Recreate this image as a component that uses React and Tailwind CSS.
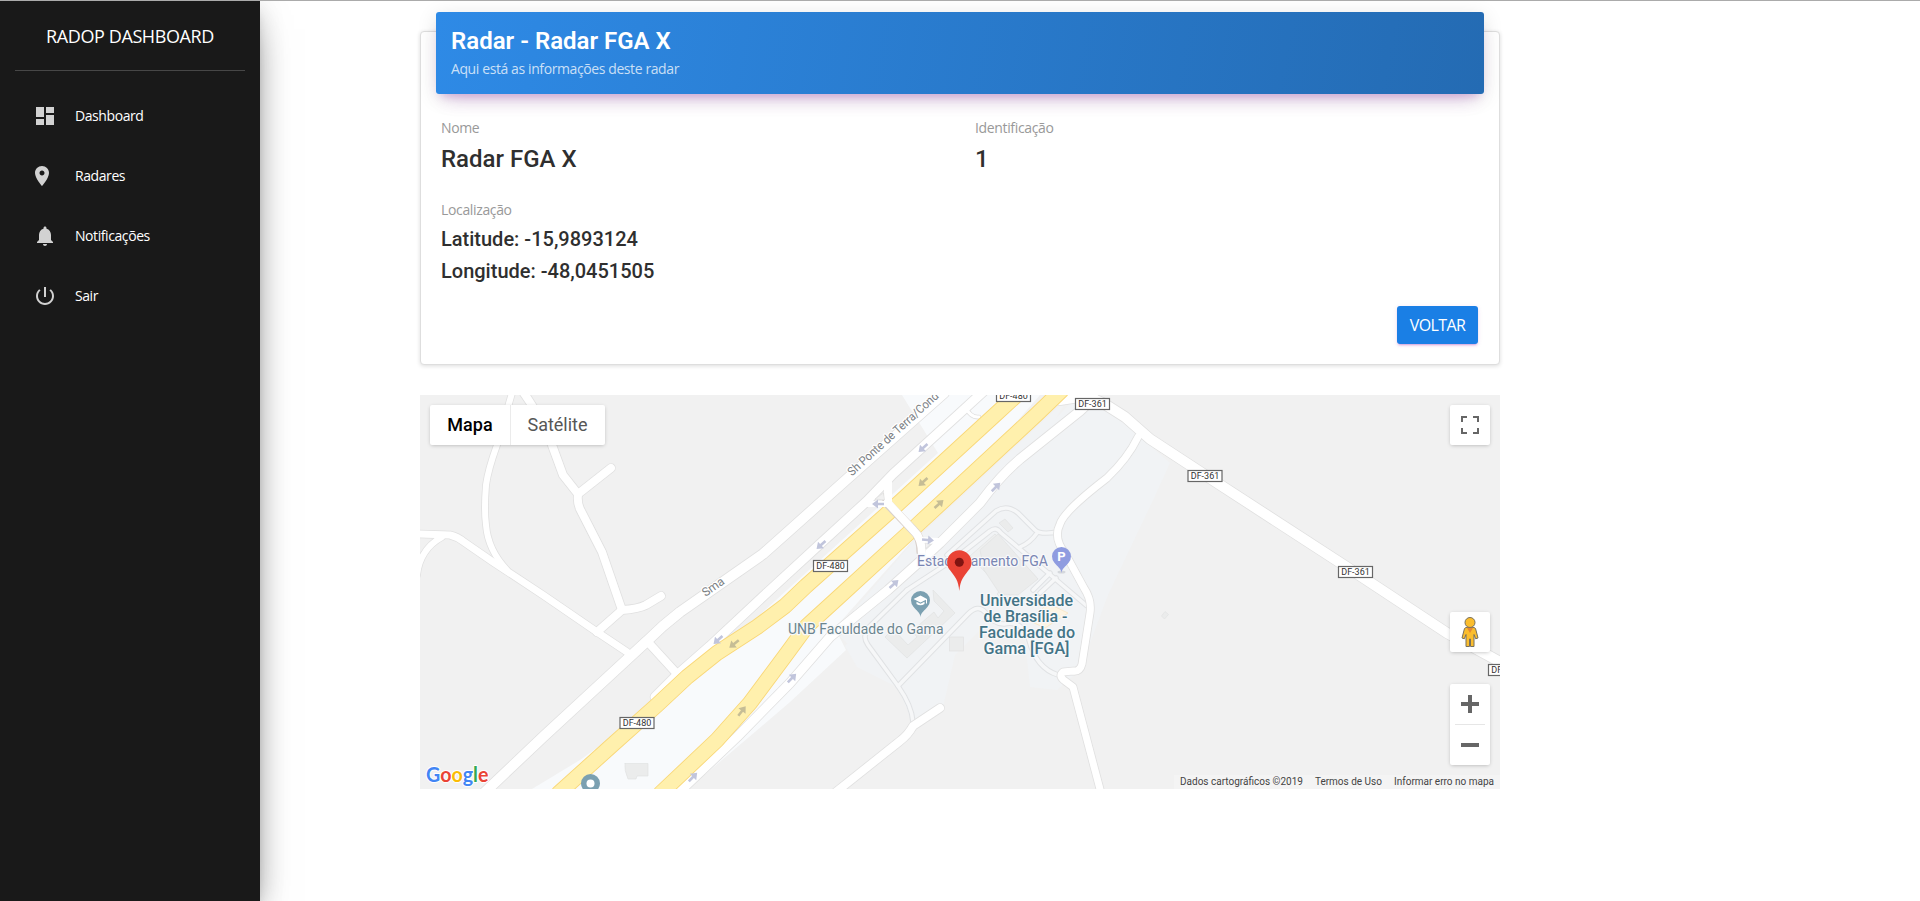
const NAV = [
  { label: "Dashboard", shift: "", d: "M3 13h8V3H3v10zm0 8h8v-6H3v6zm10 0h8V11h-8v10zm0-18v6h8V3h-8z" },
  { label: "Radares", shift: "-ml-[3px] mr-[3px]", d: "M12 2C8.13 2 5 5.13 5 9c0 5.25 7 13 7 13s7-7.75 7-13c0-3.87-3.13-7-7-7zm0 9.5c-1.38 0-2.5-1.12-2.5-2.5s1.12-2.5 2.5-2.5 2.5 1.12 2.5 2.5-1.12 2.5-2.5 2.5z" },
  { label: "Notificações", shift: "", d: "M12 22c1.1 0 2-.9 2-2h-4c0 1.1.89 2 2 2zm6-6v-5c0-3.07-1.64-5.64-4.5-6.32V4c0-.83-.67-1.5-1.5-1.5s-1.5.67-1.5 1.5v.68C7.63 5.36 6 7.92 6 11v5l-2 2v1h16v-1l-2-2z" },
  { label: "Sair", shift: "", d: "M13 3h-2v10h2V3zm4.83 2.17l-1.42 1.42C17.99 7.86 19 9.81 19 12c0 3.87-3.13 7-7 7s-7-3.13-7-7c0-2.19 1.01-4.14 2.58-5.42L6.17 5.17C4.23 6.82 3 9.26 3 12c0 4.97 4.03 9 9 9s9-4.03 9-9c0-2.74-1.23-5.18-3.17-6.83z" },
];

function Sidebar() {
  return (
    <aside className="w-[260px] shrink-0 bg-[#191919] text-white shadow-[0_16px_38px_-12px_rgba(0,0,0,0.56),0_4px_25px_0_rgba(0,0,0,0.12),0_8px_10px_-5px_rgba(0,0,0,0.2)]">
      <div className="mx-[15px] flex h-[70px] items-center justify-center border-b border-[#474747] pt-px">
        <span className="whitespace-nowrap text-[18px] leading-[30px] tracking-[-0.4px]">RADOP DASHBOARD</span>
      </div>
      <nav className="mt-[15px] flex flex-col">
        {NAV.map((item) => (
          <a key={item.label} className="flex h-[60px] items-center pl-[33px]">
            <svg viewBox="0 0 24 24" className={"h-6 w-6 fill-[#d2d2d2] " + item.shift}>
              <path d={item.d} />
            </svg>
            <span className="ml-[18px] text-[14px] leading-[30px] tracking-[-0.42px]">{item.label}</span>
          </a>
        ))}
      </nav>
    </aside>
  );
}

function Field({ label, children }) {
  return (
    <div>
      <div className="text-[14px] leading-[21px] tracking-[-0.35px] text-[#999]">{label}</div>
      {children}
    </div>
  );
}

function RadarCard() {
  return (
    <section className="mt-[30px] flex h-[334px] flex-col rounded-[4px] border border-[#dedede] bg-white px-[15px] shadow-[0_1px_4px_0_rgba(0,0,0,0.14)]">
      <header className="-mt-[20px] h-[82px] rounded-[3px] bg-[linear-gradient(100deg,#2e8ae6,#246bb3)] px-[15px] pt-[14px] shadow-[0_12px_20px_-10px_rgba(156,39,176,0.28),0_4px_20px_0_rgba(0,0,0,0.12),0_7px_8px_-5px_rgba(156,39,176,0.2)]">
        <h4 className="font-[Roboto,sans-serif] text-[24px] font-semibold leading-[30px] text-white">Radar - Radar FGA X</h4>
        <p className="mt-[2px] text-[14px] leading-[21px] tracking-[-0.4px] text-white/75">Aqui está as informações deste radar</p>
      </header>
      <div className="mt-[23px] grid grid-cols-2 px-[5px]">
        <Field label="Nome">
          <p className="mt-[5px] font-[Roboto,sans-serif] text-[24px] font-medium leading-[32px] text-[#2f2f2f]">Radar FGA X</p>
        </Field>
        <div className="pl-[15px]">
          <Field label="Identificação">
            <p className="mt-[5px] font-[Roboto,sans-serif] text-[24px] font-medium leading-[32px] text-[#2f2f2f]">1</p>
          </Field>
        </div>
      </div>
      <div className="mt-[24px] px-[5px]">
        <Field label="Localização">
          <div className="mt-[3px] font-[Roboto,sans-serif] text-[20px] font-medium leading-[32px] text-[#2f2f2f]">
            <p>Latitude: -15,9893124</p>
            <p>Longitude: -48,0451505</p>
          </div>
        </Field>
      </div>
      <div className="mt-[19px] flex justify-end pr-[6px]">
        <button className="h-[38px] w-[81px] rounded-[3px] bg-[#1a7fe5] text-[16px] tracking-[-0.6px] text-white shadow-[0_2px_2px_0_rgba(156,39,176,0.14),0_3px_1px_-2px_rgba(156,39,176,0.2),0_1px_5px_0_rgba(156,39,176,0.12)]">VOLTAR</button>
      </div>
    </section>
  );
}

const ROADS = [
  { w: 6, d: "M512 393L497 445Q488 470 486 485Q484 510 486 525Q488 550 507 570" },
  { w: 8, d: "M520 388Q536 408 552 445L563 475L578 494Q577 503 580 509L602 552L622 610" },
  { w: 8, d: "M578 494L611 468" },
  { w: 8, d: "M597 632L622 610Q638 609 646 605L661 596" },
  { w: 7, d: "M418 534L450 535Q458 537 464 542L493 562L543 595L597 632L627 652" },
  { w: 6, d: "M442 537Q420 549 417 575" },
  { w: 10, d: "M484 793L543 737L647 641Q663 625 680 612L763 554L790 530L847 479L944 393" },
  { w: 8, d: "M647 641L679 676" },
  { w: 9, d: "M655 697L677 675L710 646L770 590L820 544L867 501L893 474L960 413L984 391" },
  { w: 9, d: "M678 793L737 737L790 683L830 637L888 590L927 555L940 543L980 503Q1000 476 1020 459L1080 411L1094 398" },
  { w: 10, d: "M1060 400L1086 396L1103 403L1125 417L1150 439L1205 475L1356 573L1447 633L1504 664" },
  { w: 7, d: "M1138 437Q1128 458 1107 478Q1064 511 1060 524Q1053 538 1065 553L1084 588Q1092 600 1090 613L1082 664Q1080 672 1073 671L1063 672Q1058 676 1065 681L1073 687L1101 793" },
  { w: 8, d: "M940 708L913 726Q908 735 900 741L836 792" },
  { w: 3, d: "M966 408Q971 418 979 417" },
];

const YELLOW = [
  "M1021 391L997 413L888 513L806 586L785 606L757 627L717 653L687 677L657 705L610 747L559 793",
  "M1061 391L1036 415L913 529L841 595L807 626L785 656L750 703L717 740L661 793",
];

const PATHS = [
  "M947 555L996 511Q1007 504 1018 513L1035 530Q1040 535 1058 532",
  "M907 590L868 628Q862 637 868 645L898 686Q912 706 913 722",
  "M953 560L990 531Q996 526 1001 533L1047 572L1087 606",
  "M1037 533Q1030 543 1020 547",
  "M898 686L968 614Q978 604 985 612Q993 624 1004 624Q1023 620 1029 640Q1036 668 1058 675",
  "M1040 593L1056 578M1033 590L1050 573",
  "M907 590L953 560",
];

const ARROWS = [
  [923, 448, 138, 0], [923, 482, 138, 1], [939, 504, -42, 1], [996, 487, -45, 0],
  [878, 504, 180, 0], [928, 540, 5, 0], [821, 545, 138, 0], [894, 584, -42, 0],
  [718, 640, 138, 0], [734, 644, 142, 1], [742, 711, -52, 1], [693, 777, -46, 0], [792, 678, -46, 0],
];

const SHIELDS = [
  [1013.5, 396, "DF-480"], [1092.5, 404, "DF-361"], [830.5, 566, "DF-480"],
  [1205, 476, "DF-361"], [1355.5, 572, "DF-361"], [637, 723, "DF-480"], [1505.5, 670, "DF-361"],
];

const PIN = "M0 16.500C-0.500 11.500 -4 10.500 -6.900 6.500A9.500 9.500 0 1 1 6.900 6.500C4 10.500 0.500 11.500 0 16.500Z";

function MapDrawing() {
  return (
    <svg viewBox="420 395 1080 394" className="block h-[394px] w-[1080px] font-[Roboto,sans-serif]">
      <rect x="420" y="395" width="1080" height="394" fill="#f1f1f1" />
      <polygon points="1075,398 1110,410 1170,463 1153,500 1108,595 1080,670 1057,690 1030,687 1025,640 985,625 955,655 943,707 913,722 897,687 857,667 845,646" fill="#f1f3f5" />
      <polygon points="902,395 938,453 677,690 580,760 532,789 688,789 790,702 846,650 835,628 913,540 1040,395" fill="#f8fafc" />
      <polygon points="1068,398 913,542 835,632 860,655 960,580" fill="#f1f3f5" />
      <g fill="#ebecec" stroke="#e1e2e2" strokeWidth="0.7">
        <polygon points="995,534 970,556 1001,589 997,594 1003,600 1038,579" fill="#eeefef" />
        <polygon points="998,534 1038,579 1018,595 1000,594 984,570 980,550" />
        <polygon points="1005,519 1013,528 1008,532 999,523" />
        <path d="M933 590L955 613L907 658L885 637L893 629L908 645L917 637L912 631L934 612L938 618L944 611L934 601Z" />
        <rect x="949.5" y="637" width="14" height="14" />
        <path d="M625 763.500H648V776H637L636 779H628Q624 770 625 763Z" />
        <polygon points="1165,611.500 1168.500,614.500 1164.500,619 1161.500,616" />
      </g>
      <polygon points="1047,603 1068,613 1045,628 1032,622" fill="#fdf4e3" stroke="#f8e4bd" strokeWidth="0.7" />
      <g fill="none" strokeLinejoin="round" strokeLinecap="round">
        {PATHS.map((d) => <path key={d} d={d} stroke="#e0e2e4" strokeWidth="5.500" />)}
        {PATHS.map((d) => <path key={d} d={d} stroke="#f6f7f8" strokeWidth="3.500" />)}
        {ROADS.map((r) => <path key={r.d} d={r.d} stroke="#e0e0e0" strokeWidth={r.w + 1.6} />)}
        {ROADS.map((r) => <path key={r.d} d={r.d} stroke="#fff" strokeWidth={r.w} />)}
        {YELLOW.map((d) => <path key={d} d={d} stroke="#f9d777" strokeWidth="16" />)}
        {YELLOW.map((d) => <path key={d} d={d} stroke="#fff0ad" strokeWidth="14.200" />)}
        <path d="M887 496V503L914 531Q921 537 921 552" stroke="#d8d0cc" strokeWidth="9.200" />
        <path d="M888 480V503L914 531Q922 538 922 555" stroke="#fff" strokeWidth="8" />
        <path d="M868 504H885M919 540L938 541" stroke="#fff" strokeWidth="6" />
      </g>
      <polygon points="875,499 883.500,493 884.500,500" fill="#f1f1f1" stroke="#ddd" strokeWidth="0.6" />
      <polygon points="925.500,548.500 930.500,544.500 925.500,543" fill="#f1f1f1" stroke="#ddd" strokeWidth="0.6" />
      {ARROWS.map(([x, y, a, onYellow]) => (
        <path key={x + "-" + y} transform={`translate(${x} ${y}) rotate(${a})`} d="M-6 -1.300H0V-4.500L6 0L0 4.500V1.300H-6Z" fill={onYellow ? "#c6bd95" : "#c1c5dc"} />
      ))}

      <g fill="#7b8084" stroke="#fff" strokeWidth="2.500" paintOrder="stroke" strokeLinejoin="round">
        <text transform="translate(852 476.500) rotate(-42.300)" fontSize="12" textLength="118" lengthAdjust="spacingAndGlyphs">Sh Ponte de Terra/Cond</text>
        <text transform="translate(705.500 597) rotate(-35)" fontSize="12">Sma</text>
      </g>

      {SHIELDS.map(([x, y, t]) => (
        <g key={x}>
          <rect x={x - 17} y={y - 5.5} width="34" height="11" fill="#fff" stroke="#666" strokeWidth="1.200" />
          <text x={x} y={y + 3.1} fontSize="9" textAnchor="middle" fill="#333" textLength="28.500">{t}</text>
        </g>
      ))}

      <g transform="translate(590.5 783.5)">
        <path d={PIN} fill="#7ba0b1" />
        <circle r="4" fill="#fff" />
      </g>
      <g transform="translate(920.5 600.5)">
        <path d={PIN} fill="#7ba0b1" />
        <path d="M0 -5L-7 -1.500L0 2L5.500 -0.700V3H6.500V-1.500ZM-4 1.200V3.500Q0 6 4 3.500V1.200L0 3.200Z" fill="#fff" />
      </g>
      <g transform="translate(1061.5 556.5)">
        <ellipse cy="15.500" rx="4" ry="1.500" fill="#d5d8dc" />
        <path d={PIN} fill="#8f9ce0" />
        <text y="4.800" fontSize="13" fontWeight="700" textAnchor="middle" fill="#fff">P</text>
      </g>

      <g stroke="#f7f8fa" strokeWidth="2.500" paintOrder="stroke" strokeLinejoin="round">
        <text x="917" y="566" fontSize="14" textLength="131" fill="#7a86b3">Estacionamento FGA</text>
        <text x="788" y="634" fontSize="14" textLength="155.500" fill="#6b858f">UNB Faculdade do Gama</text>
        <g fontSize="16" fontWeight="500" textAnchor="middle" fill="#437486">
          <text x="1026.5" y="605.500" textLength="93" lengthAdjust="spacingAndGlyphs">Universidade</text>
          <text x="1025.500" y="621.500" textLength="84" lengthAdjust="spacingAndGlyphs">de Brasília -</text>
          <text x="1027" y="637.500" textLength="96" lengthAdjust="spacingAndGlyphs">Faculdade do</text>
          <text x="1026.5" y="653.500" textLength="86" lengthAdjust="spacingAndGlyphs">Gama [FGA]</text>
        </g>
      </g>

      <path d="M959.300 591C958.300 580 955 577 950.500 570.800A12.200 12.200 0 1 1 968.100 570.800C963.600 577 960.300 580 959.300 591Z" fill="#ea4335" />
      <circle cx="959.300" cy="562.300" r="4.500" fill="#811411" />

      <text x="426" y="782" fontFamily="Lato, sans-serif" fontSize="20.500" fontWeight="700" textLength="62.500" lengthAdjust="spacingAndGlyphs" stroke="#fff" strokeWidth="2" paintOrder="stroke" strokeLinejoin="round">
        <tspan fill="#4285f4">G</tspan><tspan fill="#ea4335">o</tspan><tspan fill="#fbbc05">o</tspan><tspan fill="#4285f4">g</tspan><tspan fill="#34a853">l</tspan><tspan fill="#ea4335">e</tspan>
      </text>
    </svg>
  );
}

function MapPanel() {
  return (
    <section className="relative mt-[30px] h-[394px] overflow-hidden font-[Roboto,sans-serif]">
      <MapDrawing />
      <div className="absolute left-[10px] top-[10px] flex h-[40px] rounded-[2px] bg-white text-[18px] leading-[40px] shadow-[0_1px_4px_-1px_rgba(0,0,0,0.3)]">
        <span className="w-[80px] text-center font-medium text-black">Mapa</span>
        <span className="w-[95px] border-l border-[#ebebeb] pr-px text-center text-[#565656]">Satélite</span>
      </div>
      <div className="absolute right-[10px] top-[10px] flex h-[40px] w-[40px] items-center justify-center rounded-[2px] bg-white shadow-[0_1px_4px_-1px_rgba(0,0,0,0.3)]">
        <svg viewBox="0 0 18 18" className="h-[18px] w-[18px] fill-[#666]">
          <path d="M0 0v6h2V2h4V0H0zm16 0h-4v2h4v4h2V0h-2zm0 16h-4v2h6v-6h-2v4zM2 12H0v6h6v-2H2v-4z" />
        </svg>
      </div>
      <div className="absolute bottom-[24px] right-[10px] flex flex-col gap-[32px]">
        <div className="flex h-[40px] w-[40px] items-center justify-center rounded-[2px] bg-white shadow-[0_1px_4px_-1px_rgba(0,0,0,0.3)]">
          <svg viewBox="0 0 18 32" className="mr-[1px] h-[32px] w-[18px]">
            <path d="M5 11.500L3.500 12.500L1 22L3.300 22.800L5 18.500V30.500H8.500V23H9.500V30.500H13V18.500L14.700 22.800L17 22L14.500 12.500L13 11.500Z" fill="#fbbd2d" stroke="#77705f" strokeWidth="1" strokeLinejoin="round" />
            <path d="M5.700 11.500H12.300L9 17Z" fill="#e58833" />
            <circle cx="9" cy="6.500" r="5" fill="#fbbd2d" stroke="#77705f" strokeWidth="1" />
          </svg>
        </div>
        <div className="flex h-[81px] w-[40px] flex-col items-center rounded-[2px] bg-white shadow-[0_1px_4px_-1px_rgba(0,0,0,0.3)]">
          <div className="flex h-[40px] items-center">
            <svg viewBox="0 0 18 18" className="h-[18px] w-[18px] fill-[#666]"><path d="M7 0h4v7h7v4h-7v7H7v-7H0V7h7z" /></svg>
          </div>
          <div className="h-px w-[30px] bg-[#e6e6e6]" />
          <div className="flex h-[40px] items-center">
            <svg viewBox="0 0 18 18" className="h-[18px] w-[18px] fill-[#666]"><path d="M0 7h18v4H0z" /></svg>
          </div>
        </div>
      </div>
      <div className="absolute bottom-0 right-0 flex h-[14px] items-center gap-[12px] whitespace-nowrap bg-[#f5f5f5]/70 px-[6px] text-[10px] leading-[14px] text-[#444]">
        <span>Dados cartográficos ©2019</span>
        <span>Termos de Uso</span>
        <span>Informar erro no mapa</span>
      </div>
    </section>
  );
}

export default function App() {
  return (
    <div className="flex h-[901px] w-full flex-col overflow-hidden border-t border-[#ababab] bg-white font-['Open_Sans','Noto_Sans',sans-serif]">
      <div className="flex min-h-0 flex-1">
        <Sidebar />
        <main className="flex flex-1 flex-col pl-[160px]">
          <div className="w-[1080px]">
            <RadarCard />
            <MapPanel />
          </div>
        </main>
      </div>
    </div>
  );
}
